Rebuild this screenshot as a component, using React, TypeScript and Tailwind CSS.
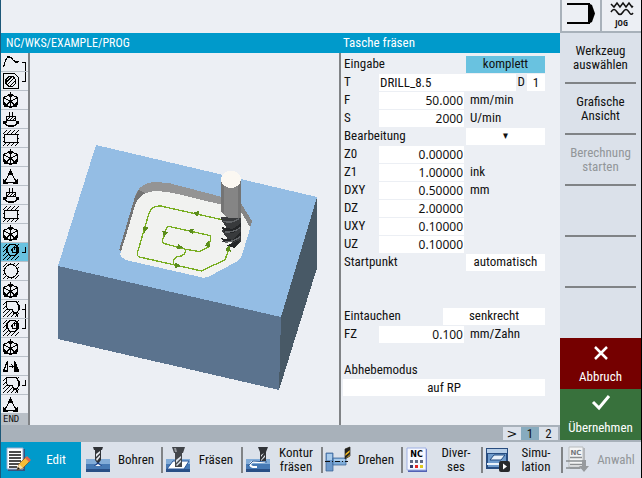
import type { ReactNode } from "react";

type StepKind = "contour" | "blank" | "cube" | "swivel" | "rect" | "triangle" | "mill" | "circle" | "island" | "mirror";
type Link = "start" | "end" | "hook" | "through" | "last" | undefined;

const steps: { kind: StepKind; name: string; link?: Link; selected?: boolean }[] = [
  { kind: "contour", name: "Kontur", link: "start" },
  { kind: "blank", name: "Rohteil", link: "end" },
  { kind: "cube", name: "Nullpunkt" },
  { kind: "swivel", name: "Schwenken" },
  { kind: "rect", name: "Rechtecktasche" },
  { kind: "cube", name: "Nullpunkt" },
  { kind: "triangle", name: "Transformation" },
  { kind: "swivel", name: "Schwenken" },
  { kind: "rect", name: "Rechtecktasche" },
  { kind: "cube", name: "Nullpunkt" },
  { kind: "mill", name: "Tasche fräsen", link: "hook", selected: true },
  { kind: "circle", name: "Kreistasche" },
  { kind: "cube", name: "Nullpunkt" },
  { kind: "island", name: "Restmaterial", link: "through" },
  { kind: "mill", name: "Tasche fräsen", link: "last" },
  { kind: "cube", name: "Nullpunkt" },
  { kind: "mirror", name: "Spiegeln" },
  { kind: "island", name: "Restmaterial", link: "hook" },
  { kind: "triangle", name: "Transformation" },
];

const hatch = "M2 5l4-4M2 9l8-8M2 13l12-12M2 17L18 1M6 17L18 5M10 17l8-8M14 17l4-4";

const linkPaths = {
  start: "M21 9.5h3.5V19",
  end: "M24.5 0v9.5H21",
  last: "M24.5 0v9.5H21",
  hook: "M24.5 4v5.5H21",
  through: "M24.5 4v15M21 9.5h3.5",
};

function StepIcon({ kind, link, selected }: { kind: StepKind; link?: Link; selected?: boolean }) {
  const paper = selected ? "#69c2e0" : "#eceff4";
  return (
    <svg className="h-[18px] w-[27px]" viewBox="0 0 27 18" fill="none" stroke="#000" strokeWidth="1.2" shapeRendering="crispEdges" aria-hidden="true">
      {kind === "contour" && <path d="M2.5 14.5l1-4 1-3 2-3.500h2l2 1 2 2.500 2 1.500h2l1-1" />}
      {kind === "blank" && (
        <>
          <path d="M2.500 1.500h11l4 4v11h-15z" />
          <path d="M8 4.500h4l2.500 3v4l-3 3H8l-3-3v-4z" />
          <path d="M5.500 10l5-5M6 13l7.500-7.500M9 14l5-5" />
        </>
      )}
      {kind === "cube" && (
        <>
          <path d="M9.500 3.500l7 3v7l-7 3-7-3v-7zM9.500 1v9.500M2.500 6.500l7 4 7-4M9.500 10.500v6M9.500 10.500l-5 4M9.500 10.500l5 4" />
          <path d="M8 4h3l-1.500 2zM4 12v3h3zM15 12v3h-3z" fill="#000" />
        </>
      )}
      {kind === "swivel" && (
        <path d="M8.500 2v5M11.500 2v5M5.500 6.500h9v4h-9zM6 10l3-3M9 10l3-3M12 10l2-2M3.500 12.500l1 2 3 1.500h5l3-1.500 1-2M2.500 14v-2h3M17.500 14v-2h-3" />
      )}
      {kind === "rect" && (
        <>
          <path d={hatch} />
          <rect x="3.500" y="5.500" width="13" height="8" fill={paper} />
        </>
      )}
      {kind === "triangle" && (
        <>
          <path d="M9.500 4.500l6 11h-12z" />
          <path d="M9.500 3.500l2 4h-4zM3 13v3h3zM16 13v3h-3z" fill="#000" />
        </>
      )}
      {kind === "mill" && (
        <>
          <path d={hatch} />
          <path d="M9 1.500h5l3 3v4l-3 4H9l-3-4v-4z" fill={paper} />
          <circle cx="13.500" cy="7" r="2.500" />
          <path d="M13.500 3v4" />
        </>
      )}
      {kind === "circle" && (
        <>
          <path d={hatch} />
          <circle cx="10" cy="9" r="6.500" fill={paper} />
        </>
      )}
      {kind === "island" && (
        <>
          <path d={hatch} />
          <path d="M6 1.500h9l3 4v4l-2 3h-3l-2-3H7l-2-3z" fill={paper} />
          <path d="M12 13.500h3l2 3" />
        </>
      )}
      {kind === "mirror" && (
        <>
          <path d="M6.500 4v10h-4zM8 9.500h4M10.500 7.500l2 2-2 2" />
          <path d="M13.500 4v10h4z" fill="#000" />
        </>
      )}
      {link && <path d={linkPaths[link]} />}
    </svg>
  );
}

const arrows = [
  [258, 160, 190], [105, 209, 100], [203, 317, 10], [356, 265, 285],
  [242, 213, 190], [164, 222, 100], [210, 261, 10], [294, 252, 285],
];

function Workpiece() {
  return (
    <svg className="h-full w-full" viewBox="30 53 309 372" shapeRendering="crispEdges" role="img" aria-label="Tasche fräsen">
      <path d="M96 145L317 197L281 317L58 266Z" fill="#94bde4" />
      <path d="M58 266L281 317L279 390L58 339Z" fill="#5b738e" />
      <path d="M317 197V268L279 390L281 317Z" fill="#485966" />
      <g transform="translate(110 160) scale(.33333)">
        <path d="M28 268L75 110Q88 66 140 66L180 70L390 125L426 183L420 204L388 160L180 120L100 130L40 290Z" fill="#949494" />
        <path d="M28 268L75 110L85 90L108 100L40 290Z" fill="#747474" />
        <path d="M390 125L426 183L420 204L388 160Z" fill="#858585" />
        <path d="M31 280L56 200L76 132Q92 93 145 93L190 99L388 147L421 203L396 285Q393 298 380 305L300 348Q285 357 267 350L60 303Q30 296 31 280Z" fill="#f1f2f0" />
        <g fill="none" stroke="#79ae22" strokeWidth="4">
          <path d="M358 265L345 299L275 333L88 291Q80 288 83 276L117 160Q125 137 152 138L340 180" />
          <path d="M228 268L160 250L157 242L170 202L176 199L301 227V240L295 262L268 275L228 268Q226 288 204 290Q188 292 190 313" />
        </g>
        {arrows.map(([x, y, turn]) => (
          <path key={`${x}-${y}`} transform={`translate(${x} ${y}) rotate(${turn})`} d="M-8 -9L10 0L-8 9Z" fill="#5b8d1c" />
        ))}
        <path d="M334 172H393V244L374 264L360 257L366 247L334 247L352 234L334 212L350 204L334 180Z" fill="#383a3c" />
        <path d="M334 201L368 207L392 190V202L370 218H345ZM334 235L368 239L392 216V229L370 247H343ZM350 257L392 239L374 264Z" fill="#242628" />
        <path d="M340 184Q367 191 387 176M344 216Q367 219 391 203M344 246Q371 247 391 229" fill="none" stroke="#606366" strokeWidth="4" />
        <path d="M333 58H393V174H366L350 172L333 155Z" fill="#858585" />
        <path d="M333 58H341V162L333 155ZM385 58H393V174H385Z" fill="#747474" />
        <ellipse cx="363" cy="58" rx="30" ry="26" fill="#fbf8f2" />
      </g>
    </svg>
  );
}

function Value({ label, value, unit }: { label: string; value: string; unit?: string }) {
  return (
    <label className="flex h-[18px] items-center">
      <span className="w-9 shrink-0 pl-px">{label}</span>
      <input className="h-[17px] w-[85px] bg-white pr-px text-right font-['Noto_Sans',sans-serif] text-[12px]" defaultValue={value} />
      {unit && <span className="pl-1.5">{unit}</span>}
    </label>
  );
}

function Choice({ label, value, wide, active }: { label: string; value: string; wide?: boolean; active?: boolean }) {
  return (
    <label className="flex h-[18px] items-center justify-between">
      <span className="pl-px">{label}</span>
      <select
        className={`h-[17px] appearance-none text-center ${wide ? "w-[102px]" : "w-[79px]"} ${active ? "bg-[#69c2e0]" : "bg-white"} ${value === "▾" ? "text-[11px]" : ""}`}
        defaultValue={value}
      >
        <option>{value}</option>
      </select>
    </label>
  );
}

function Form() {
  return (
    <form className="w-[202px] pt-0.5">
      <Choice label="Eingabe" value="komplett" active />
      <div className="flex h-[18px] items-center">
        <label className="flex flex-1 items-center">
          <span className="w-9 shrink-0 pl-px">T</span>
          <input className="h-[17px] w-[137px] bg-white pl-px" defaultValue="DRILL_8.5" />
        </label>
        <label className="flex items-center gap-0.5">
          D
          <input className="h-[17px] w-[18px] bg-white text-center" defaultValue="1" />
        </label>
      </div>
      <Value label="F" value="50.000" unit="mm/min" />
      <Value label="S" value="2000" unit="U/min" />
      <Choice label="Bearbeitung" value="▾" />
      <Value label="Z0" value="0.00000" />
      <Value label="Z1" value="1.00000" unit="ink" />
      <Value label="DXY" value="0.50000" unit="mm" />
      <Value label="DZ" value="2.00000" />
      <Value label="UXY" value="0.10000" />
      <Value label="UZ" value="0.10000" />
      <Choice label="Startpunkt" value="automatisch" />
      <div className="h-9" />
      <Choice label="Eintauchen" value="senkrecht" wide />
      <Value label="FZ" value="0.100" unit="mm/Zahn" />
      <label className="mt-[18px] block">
        <span className="block h-[18px] pl-px leading-[18px]">Abhebemodus</span>
        <select className="h-[17px] w-full appearance-none bg-white text-center" defaultValue="auf RP">
          <option>auf RP</option>
        </select>
      </label>
    </form>
  );
}

function ToolIcon({ children }: { children: ReactNode }) {
  return (
    <svg className="h-7 w-[26px] shrink-0" viewBox="0 0 26 28" aria-hidden="true">
      {children}
    </svg>
  );
}

const block = (
  <>
    <path d="M1 14h24v10H1z" fill="#4679b4" />
    <path d="M1 13h24v5H1z" fill="#82acd8" />
    <path d="M1 23h24v3H1z" fill="#294f86" />
  </>
);

const editIcon = (
  <ToolIcon>
    <path d="M3 3h17v22H3z" fill="#36527f" />
    <path d="M2 2h16v21H2z" fill="#fff" stroke="#9aaed0" />
    <path d="M4 6h12M4 9h12M4 12h12M4 15h12M4 18h11M4 21h8" stroke="#111" strokeWidth="1.500" />
    <path d="M12 24l2-6 7-7 4 4-7 7z" fill="#f5bd37" stroke="#7b4a18" strokeWidth=".7" />
    <path d="M20 12l2-2 4 4-2 2z" fill="#e06452" />
    <path d="M12 24l2-6 4 4z" fill="#f7dfad" />
    <path d="M12 24l1-3 2 2z" fill="#111" />
  </ToolIcon>
);

const drillIcon = (
  <ToolIcon>
    {block}
    <path d="M8 1h10l-1 3H9zM10 4h6v10l-3 4-3-4z" fill="#303338" />
    <path d="M11 8l4-3v2l-4 4zM11 13l4-4v2l-3 4z" fill="#e5e9ef" />
    <path d="M9 20l4-4 4 4z" fill="#173c83" />
    <path d="M10 20l3-2 3 2z" fill="#fff" />
  </ToolIcon>
);

const millIcon = (
  <ToolIcon>
    {block}
    <path d="M2 23l6-8h16l-5 8z" fill="#fff" stroke="#28569a" />
    <path d="M7 1h13l-2 6H9zM10 7h7v14h-7z" fill="#42454a" />
    <path d="M9 2h2l1 4h-2z" fill="#94989d" />
    <path d="M11 14l5-4v2l-5 5zM11 19l5-5v2l-4 4z" fill="#dce2e9" />
  </ToolIcon>
);

const contourIcon = (
  <ToolIcon>
    {block}
    <path d="M12 21H8q-4-1-2-4 1-2 5-1h9" fill="none" stroke="#fff" strokeWidth="2" />
    <path d="M3 20l5-5 14 1" fill="none" stroke="#305d98" />
    <path d="M13 1h10l-2 5h-6zM15 6h6v9h-6z" fill="#303338" />
    <path d="M16 14l4-5v2l-4 4zM16 9l3-2-3 4z" fill="#e5e9ef" />
  </ToolIcon>
);

const turnIcon = (
  <ToolIcon>
    <path d="M1 7h7v18H1z" fill="#6d99cb" stroke="#315b90" strokeWidth=".7" />
    <path d="M2 8h5v6H2z" fill="#a9cbeb" />
    <path d="M8 12h13v7H8z" fill="#80add9" stroke="#315b90" strokeWidth=".7" />
    <path d="M9 13h11v2H9z" fill="#a9cbeb" />
    <path d="M0 15.500h23" stroke="#111" strokeDasharray="5 2 1 2" />
    <path d="M20 3l5-2v9l-5 3z" fill="#f6bd24" stroke="#222" strokeWidth=".7" />
    <path d="M20 3l5-2v3l-5 4zM20 10l5-4v2l-5 5z" fill="#222" />
  </ToolIcon>
);

const miscIcon = (
  <ToolIcon>
    <path d="M3 3h19v23H3z" fill="#5262b5" />
    <path d="M2 2h19v22H2z" fill="#f6f8ff" stroke="#9eb0e4" />
    <text x="11.500" y="11" textAnchor="middle" fontFamily="DejaVu Sans" fontWeight="700" fontSize="8">NC</text>
    <path d="M5 14h3v3H5zM10 14h3v3h-3zM15 14h3v3h-3z" fill="#606984" />
    <path d="M5 19h3v3H5z" fill="#353d70" />
    <path d="M10 19h3v3h-3z" fill="#e22422" />
    <path d="M15 19h3v3h-3z" fill="#dec91d" />
  </ToolIcon>
);

const simulationIcon = (
  <ToolIcon>
    <path d="M1 2h22v21H1z" fill="#284d80" />
    <path d="M2 3h20v4H2z" fill="#b6cee8" />
    <path d="M3 8h18v13H3z" fill="#6f9bcc" />
    <path d="M5 14l4-5h11l-4 5z" fill="#e9f2fb" stroke="#214b80" />
    <path d="M2 18h14" stroke="#eaf2fa" strokeWidth="2" />
    <rect x="14" y="15" width="11" height="11" rx="2" fill="#27292c" />
    <path d="M18 17.500v6l4-3z" fill="#fff" />
  </ToolIcon>
);

const selectIcon = (
  <ToolIcon>
    <path d="M5 2h15v21H5z" fill="#b3b6ba" />
    <path d="M4 1h14v20H4z" fill="#f3f4f5" stroke="#b7babd" />
    <text x="11" y="9" textAnchor="middle" fontFamily="DejaVu Sans" fontWeight="700" fontSize="7" fill="#777a7d">NC</text>
    <path d="M5 11.500h12M1 15h19M5 18.500h12M1 22h14" stroke="#8b8e91" strokeWidth="1.500" />
    <path d="M17 14h4v6h3l-5 6-5-6h3z" fill="#979a9d" />
  </ToolIcon>
);

const tabs = [
  { icon: editIcon, text: "Edit", active: true },
  { icon: drillIcon, text: "Bohren" },
  { icon: millIcon, text: "Fräsen" },
  { icon: contourIcon, text: "Kontur\nfräsen" },
  { icon: turnIcon, text: "Drehen" },
  { icon: miscIcon, text: "Diver-\nses" },
  { icon: simulationIcon, text: "Simu-\nlation" },
  { icon: selectIcon, text: "Anwahl", disabled: true },
];

const softkeys = ["Werkzeug\nauswählen", "Grafische\nAnsicht", "Berechnung\nstarten", "", ""];

export default function App() {
  return (
    <div className="flex h-screen flex-col overflow-hidden border-r border-l border-r-black border-l-[#1d5878] bg-[#eceff4] font-['Roboto_Condensed','DejaVu_Sans_Condensed',sans-serif] text-[13px] leading-[14px] text-[#111]">
      <div className="flex min-h-0 flex-1">
        <div className="flex min-w-0 flex-1 flex-col">
          <div className="h-[33px] shrink-0" />
          <header className="flex h-5 shrink-0 items-center bg-[#009acb] text-white">
            <h1 className="flex-1 pl-[5px] text-[12px]">NC/WKS/EXAMPLE/PROG</h1>
            <h2 className="w-[217px]">Tasche fräsen</h2>
          </header>
          <main className="flex min-h-0 flex-1">
            <nav className="flex w-[29px] shrink-0 flex-col overflow-hidden border-r-2 border-[#808386]">
              {steps.map((step, i) => (
                <button
                  key={i}
                  aria-label={step.name}
                  className={`block h-[19px] w-full shrink-0 border-b border-[#b9c0c8] ${step.selected ? "bg-[#69c2e0]" : ""}`}
                >
                  <StepIcon kind={step.kind} link={step.link} selected={step.selected} />
                </button>
              ))}
              <button className="w-full flex-1 bg-[#b9c0c7] pl-0.5 text-left font-['DejaVu_Sans_Mono',monospace] text-[9px] leading-[11px]">END</button>
            </nav>
            <div className="min-w-0 flex-1">
              <Workpiece />
            </div>
            <section className="w-[221px] shrink-0 border-l-2 border-[#808386] pl-0.5">
              <Form />
            </section>
          </main>
          <div className="flex h-[17px] shrink-0 items-center justify-end bg-[#a8b1ba] pr-0.5">
            <button className="h-[13px] w-[18px] bg-[#dbe1ea] font-['DejaVu_Sans',sans-serif] leading-[13px]">&gt;</button>
            <button className="h-[13px] w-[18px] bg-[#87abbe] leading-[13px]">1</button>
            <button className="h-[13px] w-[19px] bg-[#dbe1ea] leading-[13px]">2</button>
          </div>
        </div>
        <aside className="flex w-[81px] shrink-0 flex-col bg-[#dbe1ea]">
          <div className="flex h-[33px] shrink-0 border-b-2 border-l-2 border-[#a8b1ba] bg-[#eceff4]">
            <div className="flex w-10 justify-center border-r-2 border-[#a8b1ba]">
              <svg className="h-[30px] w-[34px]" viewBox="0 0 34 30" aria-label="Maschine" role="img">
                <path d="M3 4h22v19H3" fill="none" stroke="#000" strokeWidth="2" />
                <path d="M24 3l4 2 3 8.500-3 8.500-4 2z" />
              </svg>
            </div>
            <div className="flex flex-1 flex-col items-center">
              <svg className="h-[17px] w-6" viewBox="0 0 24 17" fill="none" stroke="#111" strokeWidth="1.500" aria-hidden="true">
                <path d="M1 4l3 3 3-4 3 4 3-4 3 4 3-4 3 4 1-1M1 12q3-5 6 0 3 5 6 0 3-5 6 0 2 4 4 1" />
              </svg>
              <span className="font-['Open_Sans_Condensed',sans-serif] text-[9px] leading-[12px] font-bold">JOG</span>
            </div>
          </div>
          {softkeys.map((text, i) => (
            <button
              key={i}
              disabled={i > 1}
              aria-label={text ? undefined : "Frei"}
              className="mx-[5px] h-[51px] shrink-0 border-b-2 border-[#808386] text-center whitespace-pre-line disabled:text-[#929699]"
            >
              {text}
            </button>
          ))}
          <div className="flex-1" />
          <button className="flex h-[51px] shrink-0 flex-col items-center gap-2.5 bg-[#750000] pt-2 text-white">
            <svg className="h-3.5 w-4" viewBox="0 0 16 14" stroke="#fff" strokeWidth="2.500" aria-hidden="true">
              <path d="M2 1l12 12M14 1L2 13" />
            </svg>
            Abbruch
          </button>
          <button className="flex h-[51px] shrink-0 flex-col items-center gap-2.5 bg-[#38713c] pt-1.5 text-white">
            <svg className="h-4 w-5" viewBox="0 0 20 16" fill="none" stroke="#fff" strokeWidth="3" aria-hidden="true">
              <path d="M2 7l6 6L18 1" />
            </svg>
            Übernehmen
          </button>
          <div className="h-0.5 shrink-0 bg-[#a8b1ba]" />
        </aside>
      </div>
      <footer className="flex h-9 shrink-0 bg-[#dbe1ea]">
        {tabs.map((tab, i) => (
          <button
            key={tab.text}
            disabled={tab.disabled}
            className={`flex flex-1 items-center disabled:text-[#929699] ${tab.active ? "bg-[#009acb] text-white" : ""}`}
          >
            <span className={`h-[26px] w-0.5 ${i > 1 ? "bg-[#808386]" : ""}`} />
            <span className="pl-0.5">{tab.icon}</span>
            <span className="flex-1 text-center whitespace-pre-line">{tab.text}</span>
          </button>
        ))}
      </footer>
    </div>
  );
}
